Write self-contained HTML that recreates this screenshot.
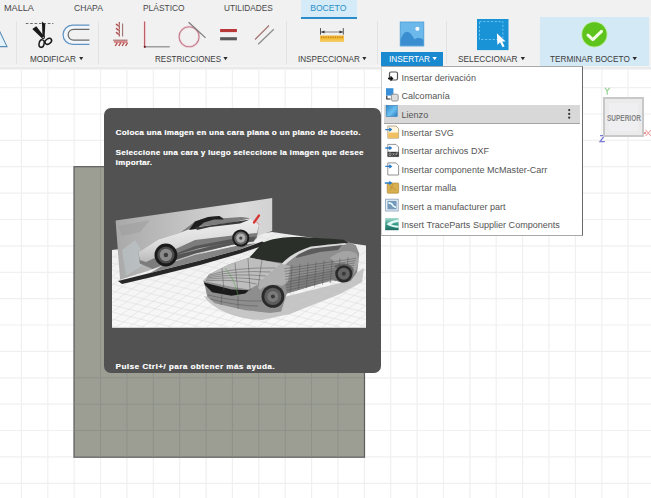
<!DOCTYPE html>
<html><head><meta charset="utf-8">
<style>
html,body{margin:0;padding:0;}
body{width:651px;height:498px;overflow:hidden;position:relative;background:#fff;font-family:"Liberation Sans",sans-serif;}
.abs{position:absolute;}
#toolbar{position:absolute;left:0;top:0;width:651px;height:64.5px;background:#f1f1f1;}
#shadow{position:absolute;left:0;top:64.5px;width:651px;height:5.5px;background:linear-gradient(#f4f4f4 0,#f4f4f4 30%,#e9e9e9 35%,#ebebeb 75%,#f8f8f8 100%);}
.tab{position:absolute;top:3.3px;font-size:8.6px;color:#484848;white-space:nowrap;line-height:10px;transform-origin:0 0;}
.lbl{position:absolute;top:54.1px;font-size:8.6px;color:#3c3c3c;white-space:nowrap;line-height:10px;transform-origin:0 0;}
.sep{position:absolute;top:21px;width:1px;height:43px;background:#e3e3e3;}
.tri{display:inline-block;width:0;height:0;border-left:2.5px solid transparent;border-right:2.5px solid transparent;border-top:3.5px solid #333;vertical-align:middle;margin-left:3px;position:relative;top:-1px;}
#menu{position:absolute;left:380.5px;top:65.5px;width:202.5px;height:170.5px;background:#fff;border:1px solid #a8a8a8;border-right-color:#6a6a6a;border-left-color:#cfcfcf;box-sizing:border-box;}
.mi{position:absolute;left:20px;font-size:9.05px;color:#555;white-space:nowrap;line-height:10px;}
#tip{position:absolute;left:104px;top:108px;width:276.7px;height:264.7px;background:#525252;border-radius:7px;}
.tt{position:absolute;left:11.6px;font-size:8px;font-weight:bold;color:#fafafa;text-shadow:0.35px 0 0 rgba(250,250,250,0.6);white-space:nowrap;line-height:10px;}
</style></head>
<body>
<!-- grid canvas -->
<svg class="abs" style="left:0;top:0" width="651" height="498">
  <g stroke="#f0f0f0" stroke-width="1.2">
    <line x1="21.4" y1="66" x2="21.4" y2="498"/><line x1="47.8" y1="66" x2="47.8" y2="498"/><line x1="74.2" y1="66" x2="74.2" y2="498"/><line x1="100.5" y1="66" x2="100.5" y2="498"/><line x1="126.9" y1="66" x2="126.9" y2="498"/><line x1="153.3" y1="66" x2="153.3" y2="498"/><line x1="179.7" y1="66" x2="179.7" y2="498"/><line x1="206.1" y1="66" x2="206.1" y2="498"/><line x1="232.4" y1="66" x2="232.4" y2="498"/><line x1="258.8" y1="66" x2="258.8" y2="498"/><line x1="285.2" y1="66" x2="285.2" y2="498"/><line x1="311.6" y1="66" x2="311.6" y2="498"/><line x1="338" y1="66" x2="338" y2="498"/><line x1="364.3" y1="66" x2="364.3" y2="498"/><line x1="390.7" y1="66" x2="390.7" y2="498"/><line x1="417.1" y1="66" x2="417.1" y2="498"/><line x1="443.5" y1="66" x2="443.5" y2="498"/><line x1="469.9" y1="66" x2="469.9" y2="498"/><line x1="496.2" y1="66" x2="496.2" y2="498"/><line x1="522.6" y1="66" x2="522.6" y2="498"/><line x1="549" y1="66" x2="549" y2="498"/><line x1="575.4" y1="66" x2="575.4" y2="498"/><line x1="601.8" y1="66" x2="601.8" y2="498"/><line x1="628.1" y1="66" x2="628.1" y2="498"/>
    <line x1="0" y1="87.6" x2="651" y2="87.6"/><line x1="0" y1="114" x2="651" y2="114"/><line x1="0" y1="140.4" x2="651" y2="140.4"/><line x1="0" y1="166.7" x2="651" y2="166.7"/><line x1="0" y1="193.1" x2="651" y2="193.1"/><line x1="0" y1="219.5" x2="651" y2="219.5"/><line x1="0" y1="245.9" x2="651" y2="245.9"/><line x1="0" y1="272.3" x2="651" y2="272.3"/><line x1="0" y1="298.6" x2="651" y2="298.6"/><line x1="0" y1="325" x2="651" y2="325"/><line x1="0" y1="351.4" x2="651" y2="351.4"/><line x1="0" y1="377.8" x2="651" y2="377.8"/><line x1="0" y1="404.2" x2="651" y2="404.2"/><line x1="0" y1="430.5" x2="651" y2="430.5"/><line x1="0" y1="456.9" x2="651" y2="456.9"/><line x1="0" y1="483.3" x2="651" y2="483.3"/>
  </g>
  <!-- grey sketch rect -->
  <rect x="74" y="166.7" width="290.5" height="290.5" fill="#9c9e94" stroke="#5c5c5c" stroke-width="1.2"/>
  <g stroke="#8f9189" stroke-width="1">
    <line x1="100.5" y1="167.5" x2="100.5" y2="456.5"/><line x1="126.9" y1="167.5" x2="126.9" y2="456.5"/><line x1="153.3" y1="167.5" x2="153.3" y2="456.5"/><line x1="179.7" y1="167.5" x2="179.7" y2="456.5"/><line x1="206.1" y1="167.5" x2="206.1" y2="456.5"/><line x1="232.4" y1="167.5" x2="232.4" y2="456.5"/><line x1="258.8" y1="167.5" x2="258.8" y2="456.5"/><line x1="285.2" y1="167.5" x2="285.2" y2="456.5"/><line x1="311.6" y1="167.5" x2="311.6" y2="456.5"/><line x1="338" y1="167.5" x2="338" y2="456.5"/>
    <line x1="74.5" y1="377.8" x2="364" y2="377.8"/><line x1="74.5" y1="404.2" x2="364" y2="404.2"/><line x1="74.5" y1="430.5" x2="364" y2="430.5"/>
  </g>
</svg>

<!-- toolbar -->
<div id="toolbar"></div>
<div id="shadow"></div>
<div class="abs" style="left:300.5px;top:0;width:56.5px;height:19px;background:#d5ebf7;"></div>
<div class="abs" style="left:300.5px;top:16.5px;width:56.5px;height:2.8px;background:#2a8cc8;"></div>
<div class="tab" style="left:4.2px;transform:scaleX(1.06)">MALLA</div>
<div class="tab" style="left:73.8px;transform:scaleX(0.997)">CHAPA</div>
<div class="tab" style="left:142.6px;transform:scaleX(0.98)">PLÁSTICO</div>
<div class="tab" style="left:224.4px;transform:scaleX(0.962)">UTILIDADES</div>
<div class="tab" style="left:310.2px;color:#2a8fc8;transform:scaleX(1.0)">BOCETO</div>

<div class="sep" style="left:16px"></div>
<div class="sep" style="left:97.5px"></div>
<div class="sep" style="left:286px"></div>
<div class="sep" style="left:377px"></div>
<div class="sep" style="left:446px"></div>
<!-- Terminar boceto bg -->
<div class="abs" style="left:540px;top:16.5px;width:109px;height:49px;background:#d3e9f5;"></div>
<!-- Insertar blue -->
<div class="abs" style="left:380.5px;top:52px;width:62.5px;height:13.5px;background:#1a8ad0;"></div>

<div class="lbl" style="left:30px;transform:scaleX(0.952)">MODIFICAR</div>
<div class="lbl" style="left:154.7px;transform:scaleX(0.935)">RESTRICCIONES</div>
<div class="lbl" style="left:297.5px;transform:scaleX(0.945)">INSPECCIONAR</div>
<div class="lbl" style="left:389.3px;color:#fff;transform:scaleX(0.96)">INSERTAR</div>
<div class="lbl" style="left:458.3px;transform:scaleX(0.966)">SELECCIONAR</div>
<div class="lbl" style="left:549.5px;transform:scaleX(0.957)">TERMINAR BOCETO</div>
<svg class="abs" style="left:0;top:0" width="651" height="66">
  <g fill="#2a2a2a">
    <path d="M79.2 57 H83.2 L81.2 60.3 Z"/>
    <path d="M223.4 57 H227.6 L225.5 60.3 Z"/>
    <path d="M362.3 57 H366.4 L364.35 60.3 Z"/>
    <path d="M432.4 57 H436.9 L434.65 60.3 Z" fill="#fff"/>
    <path d="M520.7 57 H525 L522.85 60.3 Z"/>
    <path d="M632.5 57 H636.9 L634.7 60.3 Z"/>
  </g>
</svg>

<!-- toolbar icons -->
<svg class="abs" style="left:0;top:0" width="651" height="66">
  <!-- partial triangle -->
  <path d="M-8 46.6 L-0.5 31 L7 46.6 Z" fill="#e4f2fb" stroke="#5a8db6" stroke-width="1.1"/>
  <!-- scissors dashed line -->
  <line x1="25.8" y1="23.5" x2="53.4" y2="23.5" stroke="#5a5a5a" stroke-width="0.9" stroke-dasharray="2.6,1.8"/>
  
  <!-- scissors -->
  <path d="M32.3 28.9 L36.3 26.3 L44 36.2 L42.2 38.4 Z" fill="#1a1a1a"/>
  <path d="M41.9 21.6 L45.3 24.2 L44.6 37.6 L42.5 37.4 Z" fill="#1a1a1a"/>
  <circle cx="43.2" cy="37.4" r="1.7" fill="#1a1a1a"/>
  <circle cx="43.2" cy="37.4" r="0.6" fill="#eee"/>
  <g fill="none" stroke="#1a1a1a" stroke-width="1.5">
    <ellipse cx="41.6" cy="43.6" rx="2.5" ry="3.8" transform="rotate(12 41.6 43.6)"/>
    <ellipse cx="48.3" cy="41.3" rx="3.6" ry="2.5" transform="rotate(-35 48.3 41.3)"/>
  </g>
  <!-- offset icon -->
  <path d="M89.4 25.2 H72.6 A9.55 9.55 0 0 0 72.6 44.3 H89.4 V40.2 H73.6 A5.45 5.45 0 0 1 73.6 29.3 H89.4 Z" fill="#f0f6fa"/>
  <g fill="none" stroke-width="1.2">
    <path d="M89.4 25.2 H72.6 A9.55 9.55 0 0 0 72.6 44.3 H89.4" stroke="#5f93c2"/>
    <path d="M89.4 29.3 H73.6 A5.45 5.45 0 0 0 73.6 40.2 H89.4" stroke="#6a6a6a"/>
  </g>
  <!-- fix icon -->
  
  <g stroke-width="1.1" fill="none">
    <line x1="119.3" y1="22.1" x2="119.3" y2="36.4" stroke="#a04a4a"/>
    <line x1="122.6" y1="23.5" x2="122.6" y2="36.4" stroke="#a07070"/>
    <path d="M116 24.1 l3 2.2 M116 28.2 l3 2.2 M116 32.3 l3 2.2" stroke="#f3d8d8" stroke-width="2.6"/><path d="M116 24.1 l3 2.2 M116 28.2 l3 2.2 M116 32.3 l3 2.2" stroke="#a84a4a" stroke-width="1.3"/>
    <line x1="113.2" y1="40.2" x2="127.5" y2="40.2" stroke="#a06060"/>
    <line x1="113.9" y1="42" x2="127.5" y2="42" stroke="#d04848" stroke-width="1.2"/>
    <path d="M115.2 46 l2.1 -3.4 M118.7 46 l2.1 -3.4 M122.1 46 l2.1 -3.4 M125.5 46 l2 -3.2" stroke="#b04a4a" stroke-width="1.3"/>
  </g>
  <!-- perpendicular -->
  <line x1="144.6" y1="21.4" x2="144.6" y2="47" stroke="#f6dede" stroke-width="2.6"/><line x1="144.6" y1="21.4" x2="144.6" y2="47" stroke="#b85a64" stroke-width="1.1"/>
  <line x1="144.6" y1="46.8" x2="169.8" y2="46.8" stroke="#8a8a8a" stroke-width="1.2"/>
  <circle cx="144.8" cy="46.8" r="1.1" fill="#6a1a2a"/>
  <!-- tangent -->
  <circle cx="189.1" cy="36.8" r="10" fill="none" stroke="#f3d6dc" stroke-width="2.4"/>
  <circle cx="189.1" cy="36.8" r="10" fill="none" stroke="#c08090" stroke-width="1.1"/>
  <line x1="188.6" y1="22.3" x2="205.6" y2="37.9" stroke="#7a7a7a" stroke-width="1.2"/>
  <!-- equal -->
  <rect x="220.1" y="29" width="16.8" height="3.1" fill="#b83838"/>
  <rect x="220.1" y="37.2" width="16.8" height="3.1" fill="#5a5a5a"/>
  <!-- parallel -->
  <line x1="255" y1="39.5" x2="269" y2="25.5" stroke="#a07070" stroke-width="1.1"/>
  <line x1="258.2" y1="44.3" x2="273.8" y2="29.3" stroke="#8a8a8a" stroke-width="1.2"/>
  <!-- measure -->
  <rect x="320.1" y="35.5" width="23.8" height="6.1" fill="#f3b834"/>
  <rect x="320.1" y="39.5" width="23.8" height="2.1" fill="#f6c858"/>
  <line x1="321" y1="37.2" x2="343" y2="37.2" stroke="#a86a10" stroke-width="0.9" stroke-dasharray="1.2,1.1"/>
  <g stroke="#444" stroke-width="0.9" fill="none">
    <line x1="320.5" y1="28.1" x2="320.5" y2="34.7"/>
    <line x1="343.3" y1="28.1" x2="343.3" y2="34.7"/>
    <line x1="321" y1="32" x2="343" y2="32" stroke="#777"/>
  </g>
  <path d="M321 32 L324.5 30.5 V33.5 Z M343 32 L339.5 30.5 V33.5 Z" fill="#333"/>
  <!-- image icon -->
  <rect x="400.2" y="22" width="23.6" height="24" fill="#6cb8ea" stroke="#4a9ad6" stroke-width="0.8"/>
  <path d="M400.6,45.6 L400.6,40 C402,35 404.5,31.8 407,31.8 C410,31.8 412.5,36 414.6,39.5 C416,38.2 418,37.8 420,38 L423.4,39.5 L423.4,45.6 Z" fill="#3a8ed0"/>
  <circle cx="417.4" cy="28.8" r="2.1" fill="#f2f8fc"/>
  <!-- select icon -->
  <rect x="477" y="19" width="31.5" height="31.1" fill="#1a92d6"/>
  <rect x="479.5" y="21.6" width="23.4" height="17.9" fill="none" stroke="#80d0f6" stroke-width="0.8" stroke-dasharray="2.2,1.6"/>
  <path d="M496.9 33.3 L497.4 45 L500 42.3 L502.6 47.2 L504.6 46.2 L502.2 41.6 L505.6 41.5 Z" fill="#fff"/>
  <!-- check -->
  <circle cx="594.4" cy="34.4" r="13" fill="#b8ec98"/>
  <circle cx="594.4" cy="34.4" r="12.2" fill="#5ec41c"/>
  <path d="M588 35.2 L592.8 39.6 L601.5 31.4" fill="none" stroke="#f2ffe6" stroke-width="3" stroke-linecap="round" stroke-linejoin="round"/>
</svg>

<!-- tooltip -->
<div id="tip">
  <div class="tt" style="top:20.3px;letter-spacing:0.3px;">Coloca una imagen en una cara plana o un plano de boceto.</div>
  <div class="tt" style="top:40.2px;letter-spacing:0.3px;">Seleccione una cara y luego seleccione la imagen que desee</div>
  <div class="tt" style="top:50.2px;letter-spacing:0.27px;">importar.</div>
  <div class="tt" style="top:254.2px;letter-spacing:0.52px;">Pulse Ctrl+/ para obtener más ayuda.</div>
</div>
<!-- car scene (page coords) -->
<svg class="abs" style="left:0;top:0" width="651" height="498">
  <defs>
    <clipPath id="flclip"><polygon points="112,250 272,232 366,245.5 366,327.7 112,327.7"/></clipPath>
    <linearGradient id="flr" x1="0" y1="0" x2="0" y2="1">
      <stop offset="0" stop-color="#ececec"/><stop offset="0.5" stop-color="#f4f4f4"/><stop offset="1" stop-color="#f8f8f8"/>
    </linearGradient>
    <linearGradient id="bb" x1="0" y1="0" x2="1" y2="0">
      <stop offset="0" stop-color="#a9a9a9"/><stop offset="0.45" stop-color="#c4c4c4"/><stop offset="0.8" stop-color="#dadada"/><stop offset="1" stop-color="#d2d2d2"/>
    </linearGradient>
    <linearGradient id="silv" x1="0" y1="0" x2="0.15" y2="1"><stop offset="0" stop-color="#f4f4f4"/><stop offset="0.6" stop-color="#dcdcdc"/><stop offset="1" stop-color="#b8b8b8"/></linearGradient>
    <linearGradient id="body1" x1="0" y1="0" x2="0" y2="1">
      <stop offset="0" stop-color="#f0f0f0"/><stop offset="0.45" stop-color="#d0d0d0"/><stop offset="0.7" stop-color="#6a6a6a"/><stop offset="1" stop-color="#2a2a2a"/>
    </linearGradient>
    <linearGradient id="body2" x1="0" y1="0" x2="0" y2="1">
      <stop offset="0" stop-color="#c8c8c8"/><stop offset="0.5" stop-color="#b4b4b4"/><stop offset="1" stop-color="#8c8c8c"/>
    </linearGradient>
  </defs>
  <polygon points="112,250 272,232 366,245.5 366,327.7 112,327.7" fill="url(#flr)"/>
  <g clip-path="url(#flclip)" stroke="#dedede" stroke-width="0.6"><line x1="112" y1="200.0" x2="366" y2="263.5"/><line x1="112" y1="207.0" x2="366" y2="270.5"/><line x1="112" y1="214.0" x2="366" y2="277.5"/><line x1="112" y1="221.0" x2="366" y2="284.5"/><line x1="112" y1="228.0" x2="366" y2="291.5"/><line x1="112" y1="235.0" x2="366" y2="298.5"/><line x1="112" y1="242.0" x2="366" y2="305.5"/><line x1="112" y1="249.0" x2="366" y2="312.5"/><line x1="112" y1="256.0" x2="366" y2="319.5"/><line x1="112" y1="263.0" x2="366" y2="326.5"/><line x1="112" y1="270.0" x2="366" y2="333.5"/><line x1="112" y1="277.0" x2="366" y2="340.5"/><line x1="112" y1="284.0" x2="366" y2="347.5"/><line x1="112" y1="291.0" x2="366" y2="354.5"/><line x1="112" y1="298.0" x2="366" y2="361.5"/><line x1="112" y1="305.0" x2="366" y2="368.5"/><line x1="112" y1="312.0" x2="366" y2="375.5"/><line x1="112" y1="319.0" x2="366" y2="382.5"/><line x1="112" y1="326.0" x2="366" y2="389.5"/><line x1="112" y1="333.0" x2="366" y2="396.5"/><line x1="112" y1="240.0" x2="366" y2="62.2"/><line x1="112" y1="249.0" x2="366" y2="71.2"/><line x1="112" y1="258.0" x2="366" y2="80.2"/><line x1="112" y1="267.0" x2="366" y2="89.2"/><line x1="112" y1="276.0" x2="366" y2="98.2"/><line x1="112" y1="285.0" x2="366" y2="107.2"/><line x1="112" y1="294.0" x2="366" y2="116.2"/><line x1="112" y1="303.0" x2="366" y2="125.2"/><line x1="112" y1="312.0" x2="366" y2="134.2"/><line x1="112" y1="321.0" x2="366" y2="143.2"/><line x1="112" y1="330.0" x2="366" y2="152.2"/><line x1="112" y1="339.0" x2="366" y2="161.2"/><line x1="112" y1="348.0" x2="366" y2="170.2"/><line x1="112" y1="357.0" x2="366" y2="179.2"/><line x1="112" y1="366.0" x2="366" y2="188.2"/><line x1="112" y1="375.0" x2="366" y2="197.2"/><line x1="112" y1="384.0" x2="366" y2="206.2"/><line x1="112" y1="393.0" x2="366" y2="215.2"/><line x1="112" y1="402.0" x2="366" y2="224.2"/><line x1="112" y1="411.0" x2="366" y2="233.2"/><line x1="112" y1="420.0" x2="366" y2="242.2"/><line x1="112" y1="429.0" x2="366" y2="251.2"/><line x1="112" y1="438.0" x2="366" y2="260.2"/><line x1="112" y1="447.0" x2="366" y2="269.2"/><line x1="112" y1="456.0" x2="366" y2="278.2"/><line x1="112" y1="465.0" x2="366" y2="287.2"/><line x1="112" y1="474.0" x2="366" y2="296.2"/><line x1="112" y1="483.0" x2="366" y2="305.2"/><line x1="112" y1="492.0" x2="366" y2="314.2"/><line x1="112" y1="501.0" x2="366" y2="323.2"/><line x1="112" y1="510.0" x2="366" y2="332.2"/><line x1="112" y1="519.0" x2="366" y2="341.2"/></g>
  <polygon points="115.6,220.6 272.2,198.1 272.2,231 120.1,279.8" fill="url(#bb)"/>
  <polygon points="122,250 135,240 148,262 126,276" fill="#c8d6dc" opacity="0.35"/>
  <path d="M118,226 L150,220 L140,232 L122,236 Z" fill="#9c9c9c" opacity="0.5"/>
  <!-- car1 shadow -->
  <path d="M118,281 L150,273 L200,260.5 L240,249.5 L262,241.5 L268,244 L240,253.5 L200,265 L150,277.5 L122,284 Z" fill="#161616" opacity="0.92"/>
  <path d="M150,273 L200,260.5 L240,249.5 L256,243 L240,245 L195,255 L162,266 Z" fill="#6a6a6a" opacity="0.8"/>
  <!-- car1 body -->
  <path d="M138.4,252.2 L158.1,239.5 L180.6,232.5 L195,221.6 L208.2,217.1 L219.3,216 L223.7,218.2 L241.4,217.1 L250.2,218.2 L259,224.9 L256.8,238.1 L253.5,241.4 L232.5,244.7 L195,253.6 L165,264 L152.5,269 L139.8,263.4 Z" fill="#7c7c7c"/>
  <path d="M138.4,252.2 L158.1,239.5 L180.6,232.5 L195,227 L231.4,222.7 L250.2,218.2 L259,224.9 L257,233 L232.5,235.5 L195,240 L177.8,248 L160,255.5 L146,262 L139.8,260 Z" fill="url(#silv)"/>
  <path d="M165,258 L195,246 L232,239 L256,236.5 L253.5,241.4 L232.5,244.7 L195,253.6 L172,261 Z" fill="#505050" opacity="0.85"/>
  <path d="M172,256 L200,248 L235,242 L210,246.5 Z" fill="#c8c8c8" opacity="0.7"/>
  <path d="M189,230 L195,221.6 L208.2,217.1 L219.3,216 L224,219.5 L214,219.5 L204,222.5 L196,229 Z" fill="#1e1e1e"/>
  <path d="M195,227.5 L231.4,222.3 L250,219.5 L240,223.5 L210,227 L197,230 Z" fill="#3a3a3a"/>
  <path d="M259,215.5 L254,222.5" stroke="#d83434" stroke-width="2.2" stroke-linecap="round"/><path d="M256,221 L259.5,225" stroke="#e8a0a0" stroke-width="1"/>
  <circle cx="165.9" cy="255" r="11.4" fill="#1a1a1a"/>
  <circle cx="165.9" cy="255" r="8.6" fill="#4a4a4a"/>
  <circle cx="165.9" cy="255" r="6.2" fill="#8a8a8a"/>
  <circle cx="165.9" cy="255" r="2.2" fill="#3c3c3c"/>
  <circle cx="240.8" cy="238.1" r="8.6" fill="#1a1a1a"/>
  <circle cx="240.8" cy="238.1" r="6.6" fill="#666"/>
  <circle cx="240.8" cy="238.1" r="4.6" fill="#b0b0b0"/>
  <circle cx="240.8" cy="238.1" r="1.6" fill="#444"/>
<!-- car2 shadow -->
  <path d="M204,296 C212,310 240,320 262,320 L290,314 L340,294 L362,282 L364,268 L340,283 L288,296 L250,306 Z" fill="#bdbdbd" opacity="0.85"/>
  <!-- car2 body -->
  <path d="M203.3,281.1 L209.4,274.2 L228.7,264.6 L249.4,257.6 L270.2,241.1 C285,238 295,237.5 300.6,237.7 L343.4,239.7 L355.9,245.2 L359.2,253.5 L357.3,271.5 L350.4,281.1 L342,282.5 L332.4,279.8 L286.8,293.6 L281.2,311.6 L270.2,312.9 L245.3,310.2 L214.9,303.3 L207.1,296.4 L205.2,286.7 Z" fill="#8e8e8e"/>
  <!-- lower side darker -->
  <path d="M286.8,293.6 L332.4,279.8 L342,282.5 L350.4,281.1 L357.3,271.5 L352,266 L300,276 L285,282 Z" fill="#808080"/>
  <!-- rear haunch highlight -->
  <path d="M330,258 C340,250 350,249 357,254 L358.5,262 L355.9,270.3 L352,276 C350,266 344,262 336,264 Z" fill="#a4a4a4"/>
  <path d="M334,266 C340,262 350,262 354,270 L352,278 C350,270 344,266 336,268 Z" fill="#6c6c6c"/>
  <!-- windshield + roof -->
  <path d="M249.4,257.6 L262,243.5 C270,238.5 285,236.8 300.6,237 L343.4,239.5 L348.5,242.5 L343,243.8 L326,244.8 L298,252.4 L283,263 L264.6,260.4 Z" fill="#2a2f2a"/>
  <!-- side window -->
  <path d="M298,252.4 L326,244.8 L343,243.8 L338,250 L320,252 L296,258 Z" fill="#5c5c5c"/>
  <!-- A-pillar/belt highlight -->
  <path d="M281.5,264 C288,257 296,251.5 311,246.5 L345,243 L346.5,244.5 L312,248.5 C300,252.5 292,258 284,266 Z" fill="#dadada"/>
  <!-- hood -->
  <path d="M203.3,281.1 L209.4,274.2 L228.7,264.6 L249.4,257.6 L264.6,260.4 L281.2,263.7 L272.9,271.5 L256.4,285.3 L249.4,289.4 L231.5,286.7 Z" fill="#bebebe"/>
  <!-- grille -->
  <path d="M203.8,282.5 L231.5,289.4 L249.4,290.3 L252,287.5 L245.3,293.6 L231.5,295.8 L212.1,292.2 L205.2,285.3 Z" fill="#1a1a1a"/>
  <!-- front fender -->
  <path d="M256.4,285.3 L272.9,271.5 L281.2,263.7 L290,266 L288,282 L282,286 C276,284 266,284 260,290 Z" fill="#b0b0b0"/>
  <g stroke="#4e4e4e" stroke-width="0.45" fill="none"><path d="M284.3,268.7 L356.3,258.3"/><path d="M284.6,271.4 L355.6,260.6"/><path d="M284.9,274.1 L354.9,262.9"/><path d="M285.2,276.8 L354.2,265.2"/><path d="M285.5,279.5 L353.5,267.5"/><path d="M285.8,282.2 L352.8,269.8"/><path d="M286.1,284.9 L352.1,272.1"/><path d="M286.4,287.6 L351.4,274.4"/><path d="M286.7,290.3 L350.7,276.7"/><path d="M292,264.9 L290.5,291.9"/><path d="M300,263.8 L298.5,290.1"/><path d="M308,262.7 L306.5,288.3"/><path d="M316,261.6 L314.5,286.6"/><path d="M324,260.5 L322.5,284.8"/><path d="M332,259.4 L330.5,283.0"/><path d="M340,258.3 L338.5,281.2"/><path d="M348,257.2 L346.5,279.4"/><path d="M205.7,280.7 Q235.0,279.0 256.7,284.0"/><path d="M206.3,279.3 Q235.0,276.0 261.3,280.0"/><path d="M207.0,278.0 Q235.0,273.0 266.0,276.0"/><path d="M207.7,276.7 Q235.0,270.0 270.7,272.0"/><path d="M208.3,275.3 Q235.0,267.0 275.3,268.0"/><path d="M222,268 L224,291"/><path d="M235,263 L238,293"/><path d="M248,258 L250,290"/><path d="M262,260 L258,287"/><path d="M208,295 Q235,302 262,301"/><path d="M210,299 Q238,306 258,306"/><path d="M222,293 L221,305"/><path d="M238,296 L238,309"/></g>
  <path d="M225,268 C232,276 236,286 238,296" stroke="#4aa040" stroke-width="0.6" fill="none" opacity="0.8"/>
  <circle cx="272.9" cy="296.4" r="11.4" fill="#2a2a2a"/>
  <circle cx="272.9" cy="296.4" r="8.6" fill="#5c5c5c"/>
  <circle cx="272.9" cy="296.4" r="5.5" fill="#7a7a7a"/>
  <circle cx="272.9" cy="296.4" r="2" fill="#3a3a3a"/>
  <circle cx="343.8" cy="273.8" r="8.6" fill="#2a2a2a"/>
  <circle cx="343.8" cy="273.8" r="6" fill="#646464"/>
  <circle cx="343.8" cy="273.8" r="2" fill="#3a3a3a"/>
</svg>

<!-- menu -->
<div id="menu">
  <div class="abs" style="left:2.5px;top:38.8px;width:196px;height:18.8px;background:#d8d8d8;border-bottom:1.5px solid #a4a4a4;box-sizing:border-box;"></div>
  <div class="mi" style="top:6.20px;">Insertar derivación</div>
  <div class="mi" style="top:24.64px;">Calcomanía</div>
  <div class="mi" style="top:43.07px;">Lienzo</div>
  <div class="mi" style="top:61.51px;">Insertar SVG</div>
  <div class="mi" style="top:79.95px;">Insertar archivos DXF</div>
  <div class="mi" style="top:98.39px;">Insertar componente McMaster-Carr</div>
  <div class="mi" style="top:116.82px;">Insertar malla</div>
  <div class="mi" style="top:135.26px;">Insert a manufacturer part</div>
  <div class="mi" style="top:153.70px;">Insert TraceParts Supplier Components</div>
</div>
<svg class="abs" style="left:0;top:0" width="651" height="498">
  <defs>
    <linearGradient id="lz" x1="0" y1="0" x2="1" y2="1"><stop offset="0" stop-color="#2f86c8"/><stop offset="0.55" stop-color="#6cc0f0"/><stop offset="1" stop-color="#2a7cc0"/></linearGradient>
    <linearGradient id="tp" x1="0" y1="0" x2="0" y2="1"><stop offset="0" stop-color="#a8dcd0"/><stop offset="0.5" stop-color="#3a9a88"/><stop offset="1" stop-color="#1d6b60"/></linearGradient>
  </defs>
  <!-- dots -->
  <circle cx="569.2" cy="110.1" r="1.1" fill="#333"/><circle cx="569.2" cy="113.9" r="1.1" fill="#333"/><circle cx="569.2" cy="117.7" r="1.1" fill="#333"/>
  <!-- 1 derivacion -->
  <rect x="389.5" y="72" width="8" height="8" rx="1.5" fill="none" stroke="#555" stroke-width="1.2"/>
  <path d="M388 78.5 L392 78.5 M390.5 76.5 L392.5 78.5 L390.5 80.5" stroke="#111" stroke-width="1.4" fill="none"/>
  <!-- 2 calcomania -->
  <rect x="386" y="88.2" width="7.4" height="7.4" fill="#3a90d8"/>
  <rect x="391.4" y="94.2" width="6.8" height="6.8" rx="1.5" fill="#ddd" stroke="#8a8a8a" stroke-width="0.9"/>
  <path d="M386.8 95.8 V99 H390.5" stroke="#222" stroke-width="1.1" fill="none"/>
  <!-- 3 lienzo -->
  <rect x="386.2" y="105.6" width="11" height="10.8" fill="url(#lz)" stroke="#2a78b8" stroke-width="0.6"/>
  <!-- 4 svg -->
  <path d="M387.8 126 H396 L398.6 128.6 V138.2 H387.8 Z" fill="#fff6df" stroke="#a89870" stroke-width="0.8"/>
  <rect x="388.2" y="132.6" width="10" height="5.4" fill="#f0c060"/>
  <path d="M385.3 129.6 H391 M389.3 128 L391.3 129.6 L389.3 131.2" stroke="#2a7cc8" stroke-width="1.3" fill="none"/>
  <!-- 5 dxf -->
  <path d="M387.8 144.4 H396 L398.6 147 V156.6 H387.8 Z" fill="#fff" stroke="#777" stroke-width="0.8"/>
  <rect x="387.6" y="151.8" width="11.2" height="4.9" fill="#3a3a3a"/>
  <path d="M389 153 h2 v2.5 h-2z M392.5 153 l2 2.5 M394.5 153 l-2 2.5 M396 153 h2 M396 153 v2.5 M396 154.2 h1.5" stroke="#ddd" stroke-width="0.5" fill="none"/>
  <path d="M385.3 148 H391 M389.3 146.4 L391.3 148 L389.3 149.6" stroke="#2a7cc8" stroke-width="1.3" fill="none"/>
  <!-- 6 mcmaster -->
  <path d="M387.8 162.9 H396 L398.6 165.5 V175 H387.8 Z" fill="#fff" stroke="#777" stroke-width="0.8"/>
  <path d="M385.3 166.4 H391 M389.3 164.8 L391.3 166.4 L389.3 168" stroke="#2a7cc8" stroke-width="1.3" fill="none"/>
  <!-- 7 malla -->
  <rect x="387.2" y="183" width="11.5" height="10.2" rx="1" fill="#d8b050" stroke="#a88030" stroke-width="0.6"/>
  <path d="M390 186 L396 190 M393 184 L390 191" stroke="#b08838" stroke-width="0.6"/>
  <path d="M384.8 183 H391 M389.3 181.4 L391.3 183 L389.3 184.6" stroke="#2a7cc8" stroke-width="1.3" fill="none"/>
  <!-- 8 manufacturer -->
  <rect x="385.6" y="199.2" width="12.6" height="11.8" fill="#eef5f9" stroke="#8aa4bc" stroke-width="0.9"/>
  <rect x="387.4" y="200.8" width="9.2" height="8.6" fill="#7499ba"/>
  <path d="M388.4 202.6 L391.6 203.8 L393.4 206.2 L396 207.6" stroke="#e6faff" stroke-width="1.7" fill="none"/>
  <!-- 9 traceparts -->
  <rect x="385.2" y="218" width="13.4" height="12.2" fill="url(#tp)"/>
  <path d="M398.6 219.5 C393 220 389 222 386.5 224.2 C390 226.5 394 227.5 398.6 227.8 L398.6 225.8 C395 225.5 392.5 225 391 224.2 C393 223 395.5 222.2 398.6 222 Z" fill="#dffaf4"/>
  <!-- viewcube axes -->
  <path d="M605 87.8 L607.2 91 L609.6 87.8 M607.2 91 V94.8" stroke="#8fd08a" stroke-width="1.1" fill="none"/>
  <path d="M600 135.6 H604.6 L600 141.6 H604.8" stroke="#7a7ad8" stroke-width="1.3" fill="none"/>
  <path d="M645.5 130 L651 136 M651 130 L645.5 136" stroke="#f0a0a0" stroke-width="1.1" fill="none"/>
  <circle cx="645" cy="133" r="1" fill="#e07070"/>
</svg>

<!-- viewcube -->
<div class="abs" style="left:602.8px;top:96.8px;width:41px;height:40.5px;background:#ebebeb;border:2px solid #c8c8c8;box-sizing:border-box;"></div>
<div class="abs" style="left:609px;top:103px;width:29px;height:28px;background:#efeff1;"></div>
<div class="abs" style="left:606.5px;top:113px;font-size:9px;font-weight:bold;color:#858585;white-space:nowrap;line-height:10px;transform:scaleX(0.72);transform-origin:0 0;">SUPERIOR</div>
</body></html>
